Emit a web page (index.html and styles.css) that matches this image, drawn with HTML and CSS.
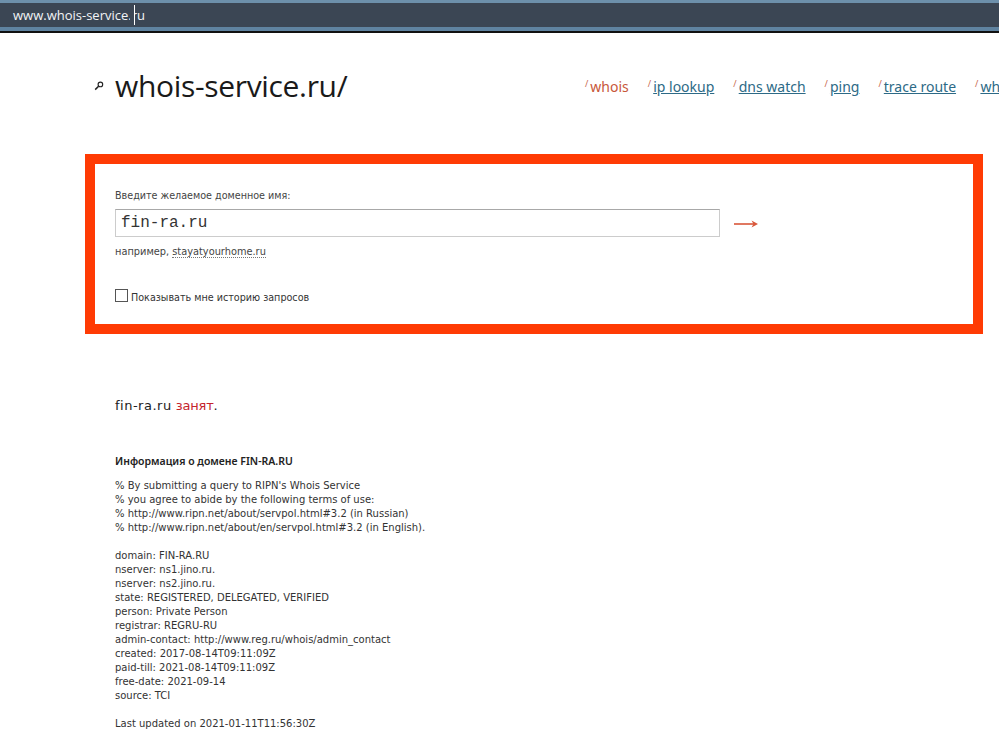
FILE: index.html
```html
<!DOCTYPE html>
<html lang="ru">
<head>
<meta charset="utf-8">
<title>whois-service.ru</title>
<link rel="stylesheet" href="styles.css">
</head>
<body>
<div class="urlbar"><span class="url">www.whois-service.ru<span class="caret"></span></span></div>
<header class="head">
  <div class="brand">
    <svg class="lens" width="10" height="10" viewBox="0 0 10 10"><circle cx="6.4" cy="3.4" r="2.3" fill="none" stroke="#222" stroke-width="1.1"/><path d="M4.6 5.2 1.2 8.6" stroke="#222" stroke-width="1.5"/></svg>
    <span class="logo">whois-service.ru/</span>
  </div>
  <nav class="nav">
    <span class="item current"><i>/</i>whois</span>
    <span class="item"><i>/</i><a href="#">ip lookup</a></span>
    <span class="item"><i>/</i><a href="#">dns watch</a></span>
    <span class="item"><i>/</i><a href="#">ping</a></span>
    <span class="item"><i>/</i><a href="#">trace route</a></span>
    <span class="item"><i>/</i><a href="#">wh</a></span>
  </nav>
</header>
<section class="box">
  <div class="label">Введите желаемое доменное имя:</div>
  <div class="inputrow">
    <div class="input">fin-ra.ru</div>
    <svg class="arrow" width="24" height="10" viewBox="0 0 24 10"><path d="M0 5H22" stroke="#d9573a" stroke-width="1.6"/><path d="M24 5 17.5 1.6 19.5 5 17.5 8.4Z" fill="#d9573a"/></svg>
  </div>
  <div class="hint">например, <span class="dotted">stayatyourhome.ru</span></div>
  <label class="check"><span class="cb"></span>Показывать мне историю запросов</label>
</section>
<main class="result">
  <p class="status"><span class="dom">fin-ra.ru</span> <span class="taken">занят</span>.</p>
  <h2 class="info">Информация о домене FIN-RA.RU</h2>
  <pre class="whois">% By submitting a query to RIPN's Whois Service
% you agree to abide by the following terms of use:
% http://www.ripn.net/about/servpol.html#3.2 (in Russian)
% http://www.ripn.net/about/en/servpol.html#3.2 (in English).

domain: FIN-RA.RU
nserver: ns1.jino.ru.
nserver: ns2.jino.ru.
state: REGISTERED, DELEGATED, VERIFIED
person: Private Person
registrar: REGRU-RU
admin-contact: http://www.reg.ru/whois/admin_contact
created: 2017-08-14T09:11:09Z
paid-till: 2021-08-14T09:11:09Z
free-date: 2021-09-14
source: TCI

Last updated on 2021-01-11T11:56:30Z</pre>
</main>
</body>
</html>
```
FILE: styles.css
```css
html, body { margin: 0; padding: 0; height: 737px; overflow: hidden; background: #fff; }
body { font-family: "DejaVu Sans", sans-serif; color: #333; width: 999px; }
.urlbar { height: 24px; background: #3b4654; border-top: 3px solid #6d90ab; border-bottom: 4px solid #5f83a0; box-shadow: 0 2px 0 #111; margin-bottom: 2px; padding-left: 13px; display: flex; align-items: center; }
.url { color: #f2f4f6; font-size: 13px; font-family: "Open Sans", sans-serif; position: relative; }
.caret { position: absolute; left: 117px; top: -1px; width: 5px; height: 20px; background: #fff; border-left: 4px solid #3b4654; box-sizing: border-box; }
.head { display: flex; padding: 32px 0 0 94px; height: 89px; white-space: nowrap; overflow: hidden; }
.brand { display: flex; align-items: center; height: 40px; width: 491px; flex: none; }
.lens { margin-right: 11px; margin-top: 2px; }
.logo { font-family: "Open Sans", sans-serif; font-size: 30px; color: #1a1a1a; letter-spacing: -0.33px; }
.nav { display: flex; gap: 19px; padding-top: 12px; font-family: "Noto Sans", sans-serif; font-size: 14px; flex: none; }
.item i { font-size: 9px; color: #c8694f; vertical-align: 5px; margin-right: 2px; font-style: normal; }
.current { color: #c8573a; }
.nav a { color: #2d6a86; text-decoration: underline; }
.box { margin-left: 85px; width: 898px; height: 180px; box-sizing: border-box; border: 10px solid #ff3b04; padding: 26px 0 0 20px; }
.label { font-size: 9.6px; color: #444; line-height: 12px; }
.inputrow { display: flex; align-items: center; margin-top: 7px; }
.input { width: 605px; height: 28px; box-sizing: border-box; border: 1px solid #ccc; border-top-color: #a8a8a8; padding-left: 5px; font-family: "Liberation Mono", monospace; font-size: 16px; line-height: 26px; color: #333; }
.arrow { margin-left: 14px; margin-top: 1px; }
.hint { font-size: 9.8px; color: #444; line-height: 12px; margin-top: 9px; }
.dotted { border-bottom: 1px dotted #777; }
.check { display: flex; align-items: center; font-size: 9.6px; color: #333; margin-top: 33px; line-height: 14px; }
.cb { width: 11px; height: 11px; border: 1px solid #555; margin-right: 3px; flex: none; margin-top: -6px; }
.result { padding: 63px 0 0 115px; }
.status { margin: 0; font-size: 13px; line-height: 18px; color: #222; }
.dom { letter-spacing: 0.5px; }
.taken { color: #c4242c; letter-spacing: -0.2px; }
.info { margin: 39px 0 0; font-family: "Noto Sans", sans-serif; font-size: 10.5px; font-weight: 600; line-height: 14px; color: #222; }
.whois { margin: 11px 0 0; font-family: "DejaVu Sans", sans-serif; font-size: 10px; line-height: 14px; color: #333; }
```
